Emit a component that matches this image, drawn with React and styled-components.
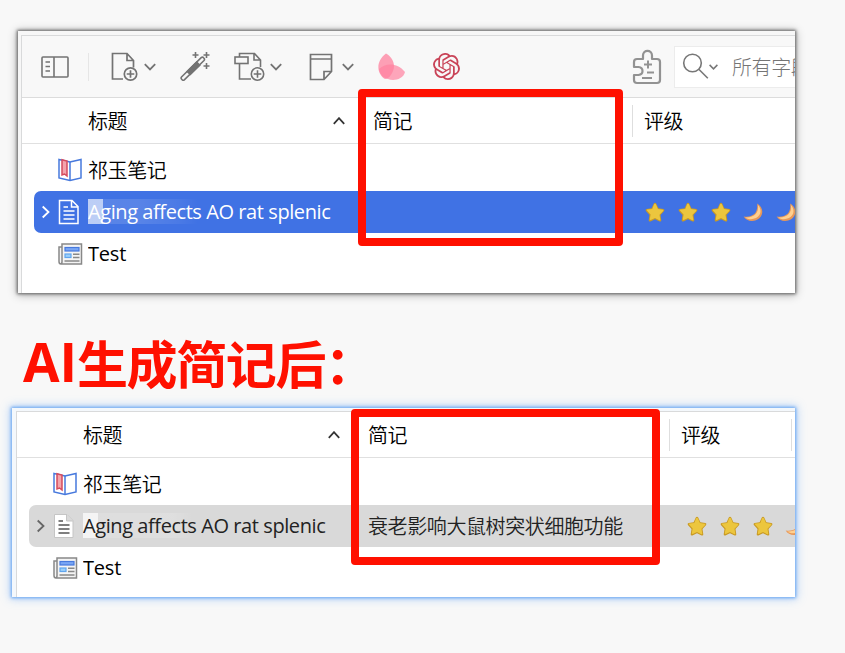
import React from 'react';
import styled, { createGlobalStyle } from 'styled-components';
import { SiOpenai } from 'react-icons/si';

const Global = createGlobalStyle`
  *, *::before, *::after { box-sizing: border-box; }
  html, body { margin: 0; background: #f8f8f8; }
  body { font-family: "Open Sans", "Noto Sans CJK SC", sans-serif; overflow: hidden; }
  svg { display: block; flex: none; }
`;

const Page = styled.main`
  width: 845px;
  height: 653px;
  padding-top: 31px;
  background: #f8f8f8;
  display: flex;
  flex-direction: column;
  align-items: flex-start;
  overflow: hidden;
`;

const Stage = styled.section`
  position: relative;
  width: ${(p) => p.$width}px;
  height: ${(p) => p.$height}px;
  margin-left: ${(p) => p.$left}px;
`;

const Panel = styled.div`
  height: 100%;
  overflow: hidden;
  background: #fff;
  padding: ${(p) => (p.$blue ? '3px 0 0 4px' : '4px 0 0 3px')};
  background: ${(p) => (p.$blue ? '#f4f8fc' : '#f7f7f7')};
  box-shadow: ${(p) =>
    p.$blue
      ? '0 0 3px 1px rgba(70,145,240,.75), 0 0 9px 2px rgba(90,160,250,.4)'
      : '0 0 3px 1px rgba(60,60,60,.75), 0 1px 9px 1px rgba(0,0,0,.28)'};
`;

const Inner = styled.div`
  height: 100%;
  overflow: hidden;
  border-top: 1px solid #d9dadb;
  border-left: 1px solid #d9dadb;
  background: #fff;
`;

const Highlight = styled.div`
  position: absolute;
  left: ${(p) => p.$x}px;
  top: ${(p) => p.$y}px;
  width: ${(p) => p.$w}px;
  height: ${(p) => p.$h}px;
  border-radius: 4px;
  border: 8px solid #ff1000;
`;

const Toolbar = styled.div`
  height: 62px;
  display: flex;
  align-items: center;
  background: #f8f8f8;
  border-bottom: 1px solid #dcdcdc;
`;

const Tool = styled.div`
  width: ${(p) => p.$w}px;
  margin-left: ${(p) => p.$gap || 0}px;
  display: flex;
  flex: none;
  align-items: center;
  justify-content: space-between;
  color: ${(p) => p.$color || '#737373'};
`;

const Separator = styled.div`
  width: 1px;
  height: 28px;
  margin-left: 19px;
  background: #e6e6e6;
  flex: none;
`;

const Search = styled.div`
  width: 180px;
  height: 42px;
  margin-left: 12px;
  padding-left: 7px;
  flex: none;
  display: flex;
  align-items: center;
  background: #fff;
  border: 1px solid #ececec;
  color: #777;
`;

const Placeholder = styled.span`
  margin-left: 14px;
  font: 300 20px/28px "Noto Sans CJK SC", sans-serif;
  letter-spacing: -0.4px;
  color: #757575;
  white-space: nowrap;
`;

const HeaderRow = styled.div`
  display: grid;
  grid-template-columns: ${(p) => p.$columns};
  height: 46px;
  align-items: center;
  border-bottom: 1px solid #e0e0e0;
`;

const HeaderCell = styled.div`
  display: flex;
  align-items: center;
  justify-content: space-between;
  height: 32px;
  padding-left: ${(p) => p.$pad}px;
  padding-right: ${(p) => p.$end || 0}px;
  border-left: ${(p) => (p.$line ? '1px solid #dedede' : '0')};
  color: #333;
`;

const Label = styled.span`
  font: 350 20px/28px "Noto Sans CJK SC", sans-serif;
  letter-spacing: -0.4px;
  color: ${(p) => p.$color || '#000'};
  white-space: nowrap;
`;

const List = styled.div`
  padding: 5px 0 0 12px;
`;

const Row = styled.div`
  display: grid;
  grid-template-columns: ${(p) => p.$columns};
  height: 42px;
  align-items: center;
  border-radius: 7px 0 0 7px;
  background: ${(p) => p.$bg || 'transparent'};
  color: ${(p) => p.$color || '#000'};
`;

const TitleCell = styled.div`
  display: grid;
  grid-template-columns: 24px 30px ${(p) => p.$clip}px;
  align-items: center;
  height: 42px;
`;

const Twisty = styled.div`
  padding-left: 7px;
  color: ${(p) => p.$color};
`;

const Name = styled.span`
  font-size: 20px;
  line-height: 28px;
  letter-spacing: ${(p) => (p.$tight ? '-0.42px' : '-0.2px')};
  white-space: nowrap;
  overflow: hidden;
`;

const Tinted = styled.span`
  display: block;
  margin-top: ${(p) => (p.$dark ? 0 : 0)}px;
  background: ${(p) =>
    p.$dark
      ? 'linear-gradient(90deg, rgba(255,255,255,.65) 15px, rgba(255,255,255,.13) 15px 50px, rgba(255,255,255,.06) 90px, transparent 110px)'
      : 'linear-gradient(90deg, rgba(255,255,255,.72) 15px, rgba(255,255,255,.13) 15px 30px, rgba(255,255,255,.15) 90px, transparent 110px)'}
    0 1px / 100% 25px no-repeat;
`;

const NoteCell = styled.div`
  padding-left: 9px;
`;

const Rating = styled.div`
  display: flex;
  gap: 12.8px;
  padding: 1px 0 0 ${(p) => p.$pad}px;
`;

const Heading = styled.h1`
  margin: 0;
  height: 115px;
  padding: 31px 0 0 23px;
  display: flex;
  align-items: flex-start;
  font-weight: 700;
  color: #ff1000;
  white-space: nowrap;
`;

const HeadingLatin = styled.span`
  font: 700 53px/76px "Open Sans", sans-serif;
  letter-spacing: 0;
  width: 54px;
`;

const HeadingHan = styled.span`
  font: 700 51px/76px "Noto Sans CJK SC", sans-serif;
  letter-spacing: -1.4px;
`;

const Chevron = ({ dir = 'down', w = 12, sw = 1.8 }) => (
  <svg width={w} height={dir === 'right' ? 14 : 8} viewBox={dir === 'right' ? '0 0 8 14' : '0 0 12 8'}
    fill="none" stroke="currentColor" strokeWidth={sw}>
    <path d={{ down: 'M.8 1.2 6 6.5l5.2-5.3', up: 'M.8 6.8 6 1.2l5.2 5.6', right: 'M1.2 1.5 7 7l-5.8 5.5' }[dir]} />
  </svg>
);

const SidebarIcon = () => (
  <svg width="28" height="22" viewBox="0 0 28 22" fill="none" stroke="currentColor" strokeWidth="1.6">
    <rect x="1" y="1" width="26" height="20" rx="1" />
    <path d="M13 1v20M4.5 6H9M4.5 10.5H9M4.5 15H9" />
  </svg>
);

const AddFileIcon = () => (
  <svg width="27" height="30" viewBox="0 0 27 30" fill="none" stroke="currentColor" strokeWidth="1.7">
    <path d="M12 27H1.5V1.5H16l6.5 7v7M16 1.5v7h6.5" />
    <circle cx="19.5" cy="22" r="6.2" />
    <path d="M19.5 18.2v7.6M15.7 22h7.6" />
  </svg>
);

const WandIcon = () => (
  <svg width="31" height="31" viewBox="0 0 31 31" fill="none" stroke="currentColor" strokeWidth="1.6">
    <path d="M1.5 26 21.2 6.7q1.2-1 2.3 0l.5.6q1 1.1 0 2.2L4.3 28.8q-1 .8-2 0l-.8-.8q-.8-1 0-2Z" />
    <path d="m7.2 20.5 9.5-9.3 3 3-9.4 9.3Z" fill="currentColor" />
    <path d="M15.5 1v6M12.5 4h6M26.5 1v6M23.5 4h6M26.5 12v6M23.5 15h6" />
  </svg>
);

const AddAttachmentIcon = () => (
  <svg width="31" height="30" viewBox="0 0 31 30" fill="none" stroke="currentColor" strokeWidth="1.6">
    <path d="M5.5 5V1.5h15l6 6.5v7M20 1.5V8h6.5M5.5 12v15H17" />
    <rect x="1" y="5" width="13" height="6.5" />
    <circle cx="23.5" cy="22" r="6.2" />
    <path d="M23.5 18.2v7.6M19.7 22h7.6" />
  </svg>
);

const NoteIcon = () => (
  <svg width="24" height="28" viewBox="0 0 24 28" fill="none" stroke="currentColor" strokeWidth="1.7">
    <path d="M1.5 1.5h21v17L15 26.5H1.5ZM1.5 6h21M22.5 18.5H15v8" />
  </svg>
);

const PetalsIcon = () => (
  <svg width="28" height="28" viewBox="0 0 28 28">
    <path d="M8 .5C14 4 18 11 15 18c-2 5-5 8-8 8C-2 20-2 8 8 .5Z" fill="#ff829f" fillOpacity=".75" />
    <path d="M1 16c6-6 18-7 26 3-2 8-12 9-17 7-4-1-8-4-9-10Z" fill="#ff829f" fillOpacity=".7" />
  </svg>
);

const PluginIcon = () => (
  <svg width="30" height="36" viewBox="0 0 30 36" fill="none" stroke="currentColor" strokeWidth="2.2" strokeLinejoin="round">
    <path d="M5 10h6V6.5C11 .2 20 .2 20 6.5V10h5q3 0 3 3v18q0 3-3 3H5q-3 0-3-3v-5h4.5q4-.5 4-4t-4-4H2v-5q0-3 3-3Z" />
    <path d="M16 11.5v8M12 15.5h8M15 23.5h7M10 29h10" strokeWidth="2" />
  </svg>
);

const SearchIcon = () => (
  <svg width="27" height="27" viewBox="0 0 27 27" fill="none" stroke="currentColor" strokeWidth="1.6">
    <circle cx="10.5" cy="10" r="8.8" />
    <path d="m16.8 16.3 9 9" />
  </svg>
);

const BookIcon = () => (
  <svg width="24" height="24" viewBox="0 0 24 24" strokeWidth="1.5">
    <path d="M1 1.5 12 4l11-2.5V20l-11 2.5L1 20Z" fill="#fff" stroke="#4779dd" />
    <path d="M12 4v18.5" stroke="#4779dd" />
    <path d="M4 1.7 9 3v15l-2.5-2L4 17Z" fill="#f3a4ad" stroke="#d54b5d" />
  </svg>
);

const PaperIcon = ({ light }) => (
  <svg width="22" height="26" viewBox="0 0 22 26" fill={light ? 'none' : '#fff'}
    stroke={light ? '#fff' : '#c5c5c5'} strokeWidth={light ? 1.5 : 1}>
    <path d="M1.5 1.5H14l6 6v17H1.5ZM13.5 1.5V8H20" />
    <path d="M5.5 8H10M5.5 12H16.5M5.5 16H16.5M5.5 20H16.5" stroke={light ? '#fff' : '#555'} strokeWidth="1.5" />
  </svg>
);

const NewsIcon = () => (
  <svg width="25" height="22" viewBox="0 0 25 22" fill="none" stroke="#888" strokeWidth="1.5">
    <path d="M4 4H1v14.5Q1 21 3 21h20.5V1H4v17.5Q4 21 2.5 21" fill="#f4f4f4" />
    <rect x="7" y="4.5" width="14" height="3.5" fill="#79a6f4" stroke="#4779dd" strokeWidth="1.2" />
    <rect x="7" y="11" width="6" height="3.5" fill="#9bd0fa" stroke="#60a5ee" strokeWidth="1.2" />
    <path d="M15 11.2h6.5M15 14.5h6.5M6.5 18H21.5" strokeWidth="1.4" />
  </svg>
);

const Star = () => (
  <svg width="20" height="21" viewBox="0 0 20 21">
    <path d="M8.8 1.5q1.2-1.5 2.4 0l2.2 4.8 5 .7q1.6.5.7 2l-3.6 3.9.8 5.3q0 1.8-1.7 1.3L10 17.2l-4.6 2.3q-1.7.4-1.7-1.3l.8-5.3L.9 9q-.9-1.5.7-2l5-.7Z" fill="#c99a24" />
    <path d="M9.1 2.2q.9-1 1.8 0l2 4.8 4.9.8q1 .4.4 1.2l-3.7 3.7.8 5q0 .8-1 .6L10 16l-4.3 2.1q-1 0-.9-.8l.8-4.8L2 8.6q-.5-.8.5-1l4.8-.7Z" fill="#ecc63e" />
  </svg>
);

const Moon = () => (
  <svg width="20" height="20" viewBox="0 0 20 20">
    <path d="M14.2 1.5c7.2 4.2 6.7 13.8-1.2 16.8-5 1.8-10 .2-12.3-3.8C9.5 15.7 15.3 11.5 14.2 1.5Z" fill="#e89858" />
    <path d="M14.8 3c4 4 3.8 10-1.8 13.1C8.8 18 4.7 17.3 2.2 15.4 11 16 16.5 10.5 14.8 3Z" fill="#ffd090" />
  </svg>
);

const ColumnsHeader = ({ columns, last }) => (
  <HeaderRow $columns={columns}>
    <HeaderCell $pad={66} $end={18}>
      <Label>标题</Label>
      <Chevron dir="up" w={14} />
    </HeaderCell>
    <HeaderCell $pad={9}><Label>简记</Label></HeaderCell>
    <HeaderCell $line $pad={11}><Label>评级</Label></HeaderCell>
    {last && <HeaderCell $line $pad={0} />}
  </HeaderRow>
);

const Item = ({ columns, icon, title, selected, clip = 268, note, han, pad, moons = 0 }) => {
  const blue = selected === 'blue';
  return (
    <Row $columns={columns} $bg={selected && (blue ? '#4072e4' : '#d9d9d9')}
      $color={selected ? (blue ? '#fff' : '#222') : '#000'}>
      <TitleCell $clip={clip}>
        <Twisty $color={blue ? '#fff' : '#666'}>{selected && <Chevron dir="right" w={9} />}</Twisty>
        {icon}
        {han ? <Label>{title}</Label> : (
          <Name $tight={!!selected}>{selected ? <Tinted $dark={blue}>{title}</Tinted> : title}</Name>
        )}
      </TitleCell>
      <NoteCell>{note && <Label $color="#222">{note}</Label>}</NoteCell>
      {selected && (
        <Rating $pad={pad}>
          <Star /><Star /><Star />
          {Array.from({ length: moons }, (_, i) => <Moon key={i} />)}
        </Rating>
      )}
    </Row>
  );
};

export default function App() {
  return (
    <>
      <Global />
      <Page>
        <Stage $left={18} $width={777} $height={262}>
          <Panel>
            <Inner>
              <Toolbar>
                <Tool $w={28} $gap={19}><SidebarIcon /></Tool>
                <Separator />
                <Tool $w={45} $gap={22}><AddFileIcon /><Chevron /></Tool>
                <Tool $w={31} $gap={24}><WandIcon /></Tool>
                <Tool $w={48} $gap={23}><AddAttachmentIcon /><Chevron /></Tool>
                <Tool $w={45} $gap={27}><NoteIcon /><Chevron /></Tool>
                <Tool $w={28} $gap={24}><PetalsIcon /></Tool>
                <Tool $w={27} $gap={27} $color="#c94458"><SiOpenai size={27} /></Tool>
                <Tool $w={30} $gap={172} $color="#929292"><PluginIcon /></Tool>
                <Search>
                  <SearchIcon />
                  <Chevron w={9} sw={2} />
                  <Placeholder>所有字段</Placeholder>
                </Search>
              </Toolbar>
              <ColumnsHeader columns="342px 268px 1fr" />
              <List>
                <Item columns="330px 268px 1fr" icon={<BookIcon />} title="祁玉笔记" han />
                <Item columns="330px 268px 1fr" icon={<PaperIcon light />} clip={253}
                  title="Aging affects AO rat splenic" selected="blue" pad={13} moons={2} />
                <Item columns="330px 268px 1fr" icon={<NewsIcon />} title="Test" />
              </List>
            </Inner>
          </Panel>
          <Highlight $x={340} $y={58} $w={265} $h={157} />
        </Stage>
        <Heading>
          <HeadingLatin>AI</HeadingLatin>
          <HeadingHan>生成简记后：</HeadingHan>
        </Heading>
        <Stage $left={12} $width={783} $height={189}>
          <Panel $blue>
            <Inner>
              <ColumnsHeader columns="342px 310px 122px 1fr" last />
              <List>
                <Item columns="330px 310px 1fr" icon={<BookIcon />} title="祁玉笔记" han />
                <Item columns="330px 310px 1fr" icon={<PaperIcon />}
                  title="Aging affects AO rat splenic" selected="grey" note="衰老影响大鼠树突状细胞功能" pad={18} moons={1} />
                <Item columns="330px 310px 1fr" icon={<NewsIcon />} title="Test" />
              </List>
            </Inner>
          </Panel>
          <Highlight $x={339} $y={1} $w={309} $h={156} />
        </Stage>
      </Page>
    </>
  );
}
